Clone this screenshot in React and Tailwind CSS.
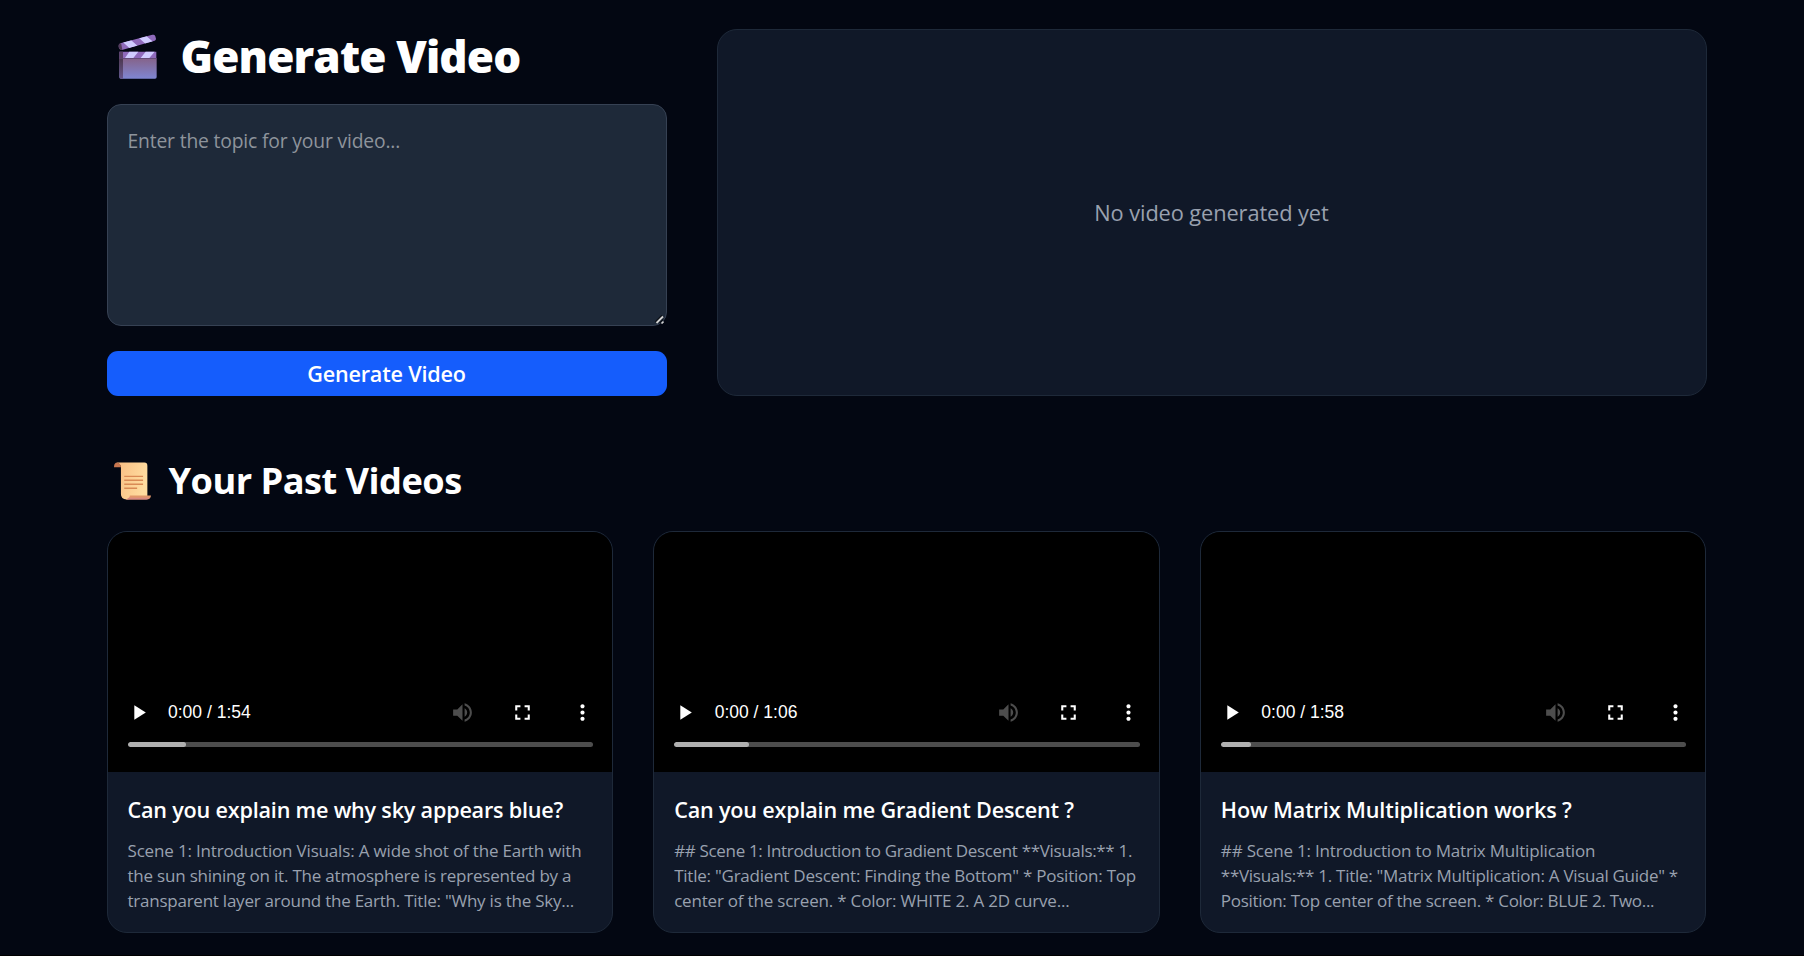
import React from 'react';

const videos = [
  {
    title: 'Can you explain me why sky appears blue?',
    titleTracking: 'tracking-[-0.2px]',
    duration: '1:54',
    buffered: 58,
    lines: [
      ['tracking-[-0.17px]', 'Scene 1: Introduction Visuals: A wide shot of the Earth with'],
      ['tracking-[-0.21px]', 'the sun shining on it. The atmosphere is represented by a'],
      ['tracking-[-0.24px]', 'transparent layer around the Earth. Title: "Why is the Sky...'],
    ],
  },
  {
    title: 'Can you explain me Gradient Descent ?',
    titleTracking: 'tracking-[-0.19px]',
    duration: '1:06',
    buffered: 75,
    lines: [
      ['tracking-[-0.33px]', '## Scene 1: Introduction to Gradient Descent **Visuals:** 1.'],
      ['tracking-[-0.23px]', 'Title: "Gradient Descent: Finding the Bottom" * Position: Top'],
      ['tracking-[-0.2px]', 'center of the screen. * Color: WHITE 2. A 2D curve...'],
    ],
  },
  {
    title: 'How Matrix Multiplication works ?',
    titleTracking: 'tracking-[-0.12px]',
    duration: '1:58',
    buffered: 30,
    lines: [
      ['tracking-[-0.18px]', '## Scene 1: Introduction to Matrix Multiplication'],
      ['tracking-[-0.28px]', '**Visuals:** 1. Title: "Matrix Multiplication: A Visual Guide" *'],
      ['tracking-[-0.29px]', 'Position: Top center of the screen. * Color: BLUE 2. Two...'],
    ],
  },
];

function ClapperIcon() {
  return (
    <svg className="h-[45px] w-[39px] shrink-0" viewBox="23 28 117 135" aria-hidden="true">
      <defs>
        <linearGradient id="clapperBody" x1="0" y1="0" x2="0" y2="1">
          <stop offset="0" stopColor="#85638a" />
          <stop offset="1" stopColor="#7f86d2" />
        </linearGradient>
        <linearGradient id="clapperEdge" x1="0" y1="0" x2="0" y2="1">
          <stop offset="0" stopColor="#4c3850" />
          <stop offset="1" stopColor="#67568c" />
        </linearGradient>
        <clipPath id="clapperArm">
          <path d="M30 56 L126 30 Q133 29 135 35 L137 42 Q137 46 133 48 L35 76 Q27 77 25 68 Q23 59 30 56Z" />
        </clipPath>
      </defs>
      <g clipPath="url(#clapperArm)">
        <rect x="20" y="25" width="120" height="60" fill="#8f6abb" />
        <path d="M20 50 L32 54 L37 80 L20 80Z" fill="#553d5c" />
        <path d="M38 53 L62 46 L82 64 L58 71Z M86 40 L108 34 L128 51 L106 58Z" fill="#d0cbff" />
      </g>
      <path d="M27 81 H138 V102 H27Z" fill="#8f6abb" />
      <path d="M27 81 H38 V102 H27Z" fill="#5a4166" />
      <path d="M57 81 H84 L69 100 H44Z M106 81 H133 L117 100 H91Z" fill="#d0cbff" />
      <path d="M27 101 H139 V157 Q139 162 134 162 H32 Q27 162 27 157Z" fill="url(#clapperBody)" />
      <path d="M27 101 H38 V162 H32 Q27 162 27 157Z" fill="url(#clapperEdge)" />
      <path d="M27 100 H139 V102 H27Z" fill="#5d4570" />
    </svg>
  );
}

function ScrollIcon() {
  return (
    <svg className="h-[38px] w-[37px] shrink-0" viewBox="26 35 112 114" aria-hidden="true">
      <defs>
        <linearGradient id="scrollPaper" x1="0" y1="0" x2="1" y2="0.3">
          <stop offset="0" stopColor="#f8bd82" />
          <stop offset="1" stopColor="#ffdc9f" />
        </linearGradient>
      </defs>
      <path d="M34 36 H118 Q127 36 127 46 V138 L64 148 Q47 147 47 132 V50 Q46 40 34 36Z" fill="url(#scrollPaper)" />
      <path d="M36 36 Q26 36 26 50 H47 Q47 39 36 36Z" fill="#c8764f" />
      <path d="M74 136 H138 Q137 148 124 148 H62 Q73 147 74 136Z" fill="#e2976b" />
      <path d="M70 143 H134 Q131 148 124 148 H62 Q67 147 70 143Z" fill="#d98a82" />
      <path d="M57 78 H114 M57 90 H114 M57 102 H114 M57 114 H96" stroke="#d98a55" strokeWidth="4.5" />
    </svg>
  );
}

function ControlIcon({ d, className }) {
  return (
    <svg className={className} viewBox="0 0 24 24" fill="currentColor" aria-hidden="true">
      <path d={d} />
    </svg>
  );
}

function VideoPlayer({ duration, buffered }) {
  return (
    <div className="flex h-60 flex-col justify-end bg-black pb-[25px] text-white">
      <div className="flex h-[25px] items-center pr-[17.5px] pl-[18px]">
        <ControlIcon className="size-[25px]" d="M8 5v14l11-7z" />
        <span className="ml-[17.5px] grow font-['Liberation_Sans',sans-serif] text-[17.5px] leading-[25px]">
          0:00 / {duration}
        </span>
        <div className="flex gap-[35px]">
          <ControlIcon
            className="size-[25px] text-white/30"
            d="M3 9v6h4l5 5V4L7 9H3zm13.5 3c0-1.77-1.02-3.29-2.5-4.03v8.05c1.48-.73 2.5-2.25 2.5-4.02zM14 3.23v2.06c2.89.86 5 3.54 5 6.71s-2.11 5.85-5 6.71v2.06c4.01-.91 7-4.49 7-8.77s-2.99-7.86-7-8.77z"
          />
          <ControlIcon
            className="size-[25px]"
            d="M7 14H5v5h5v-2H7v-3zm-2-4h2V7h3V5H5v5zm12 7h-3v2h5v-5h-2v3zM14 5v2h3v3h2V5h-5z"
          />
          <ControlIcon
            className="size-[25px]"
            d="M12 8c1.1 0 2-.9 2-2s-.9-2-2-2-2 .9-2 2 .9 2 2 2zm0 2c-1.1 0-2 .9-2 2s.9 2 2 2 2-.9 2-2-.9-2-2-2zm0 6c-1.1 0-2 .9-2 2s.9 2 2 2 2-.9 2-2-.9-2-2-2z"
          />
        </div>
      </div>
      <div className="mt-[17px] mr-[19px] ml-5 h-[5px] overflow-hidden rounded-full bg-[#4d4d4d]">
        <div className="h-full rounded-full bg-[#b0b0b0]" style={{ width: buffered }} />
      </div>
    </div>
  );
}

function VideoCard({ video }) {
  return (
    <article className="overflow-hidden rounded-[20px] border border-gray-800 bg-gray-900">
      <VideoPlayer duration={video.duration} buffered={video.buffered} />
      <div className="px-5 pt-5 pb-[19px]">
        <h3 className={`text-[21.6px] leading-[35px] font-semibold whitespace-nowrap ${video.titleTracking}`}>
          {video.title}
        </h3>
        <p className="mt-[11px] text-[17px] leading-[25px] whitespace-nowrap text-gray-400">
          {video.lines.map(([tracking, line]) => (
            <span key={line} className={`block ${tracking}`}>
              {line}
            </span>
          ))}
        </p>
      </div>
    </article>
  );
}

export default function App() {
  return (
    <div className="flex h-[956px] flex-col overflow-hidden border-b border-black bg-gray-950 font-['Open_Sans','Noto_Sans',sans-serif] text-white">
      <main className="ml-[106.5px] w-[1600px] pt-[29px]">
        <section className="grid h-[367px] grid-cols-[560px_990px] gap-[50px]">
          <div className="flex flex-col">
            <h1 className="mb-[21px] flex h-[54px] pl-[11px] text-[44px] leading-[54px] font-extrabold tracking-[-0.85px] whitespace-nowrap">
              <span className="mt-[5px] mr-6 flex">
                <ClapperIcon />
              </span>
              Generate Video
            </h1>
            <div className="relative h-[222px]">
              <textarea
                className="block h-full w-full resize-none rounded-[14px] border border-gray-700 bg-gray-800 px-5 pt-[21px] text-[19.3px] leading-[30px] tracking-[-0.16px] outline-none placeholder:text-[#8e949c]"
                placeholder="Enter the topic for your video..."
              />
              <svg className="absolute right-[3px] bottom-[2px] size-[9px]" viewBox="0 0 9 9" fill="none" aria-hidden="true">
                <path d="M0.5 7 L7 0.5" stroke="#0b0f16" strokeWidth="1.6" />
                <path d="M1.5 8 L8 1.5" stroke="#d2d2d2" strokeWidth="1.8" />
                <path d="M4.5 8 L8 4.5" stroke="#0b0f16" strokeWidth="1.4" />
                <path d="M6.5 8.5 L8.5 6.5" stroke="#d2d2d2" strokeWidth="1.6" />
              </svg>
            </div>
            <button className="mt-[25px] h-[45px] rounded-[11px] bg-blue-600 text-[21.6px] leading-[35px] font-semibold tracking-[-0.2px]">
              Generate Video
            </button>
          </div>
          <div className="flex items-center justify-center rounded-[20px] border border-gray-800 bg-gray-900">
            <p className="text-[21.8px] leading-[35px] tracking-[-0.1px] text-gray-400">No video generated yet</p>
          </div>
        </section>

        <section className="mt-[60px]">
          <h2 className="mb-[27px] flex h-12 pl-[7px] text-[36.2px] leading-[48px] font-bold tracking-[-0.52px] whitespace-nowrap">
            <span className="mt-[6px] mr-[18px] flex">
              <ScrollIcon />
            </span>
            Your Past Videos
          </h2>
          <div className="grid grid-cols-3 gap-10">
            {videos.map((video) => (
              <VideoCard key={video.title} video={video} />
            ))}
          </div>
        </section>
      </main>
    </div>
  );
}
